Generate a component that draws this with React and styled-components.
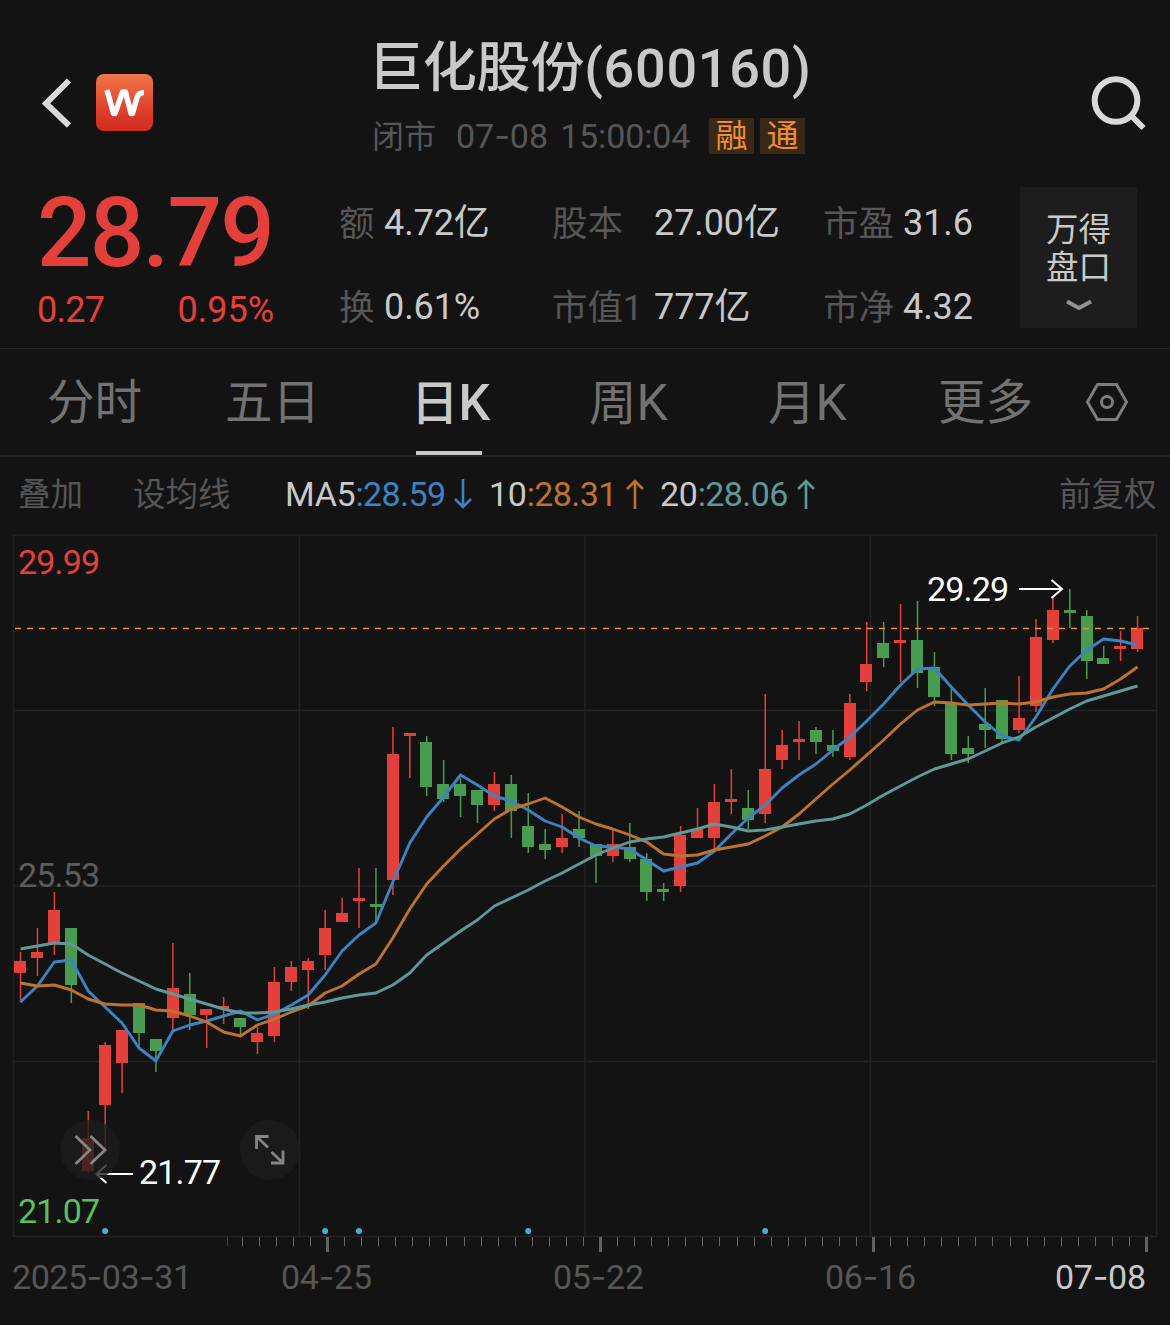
import React, { useState } from "react";
import styled, { createGlobalStyle } from "styled-components";

const GlobalStyle = createGlobalStyle`
  * {
    box-sizing: border-box;
  }
  body {
    margin: 0;
    background: #131313;
    font-family: Roboto, "Noto Sans CJK SC", sans-serif;
  }
`;

const colors = {
  up: "#e4403b",
  down: "#479c4f",
  ma5: "#3b83c2",
  ma10: "#bd732b",
  ma20: "#5f9997",
  grid: "#232323",
  bright: "#c9c9c9",
  muted: "#565656",
  tab: "#727272",
};

const Page = styled.main`
  width: 1170px;
  height: 1325px;
  overflow: hidden;
  background: #131313;
  color: ${colors.bright};
  white-space: nowrap;
`;

const Header = styled.header`
  display: flex;
  height: 170px;
  padding: 37px 24px 0 41px;
`;

const HeaderLeft = styled.div`
  display: flex;
  align-items: center;
  gap: 24px;
  width: 331px;
  height: 57px;
  margin-top: 37px;
`;

const HeaderCenter = styled.div`
  flex: 1;
`;

const Title = styled.h1`
  margin: 0 0 17px -3px;
  font-size: 54px;
  line-height: 64px;
  font-weight: 500;
  letter-spacing: -0.2px;
  span {
    letter-spacing: 0.7px;
  }
`;

const SubTitle = styled.div`
  display: flex;
  align-items: center;
  height: 36px;
  font-size: 34px;
  line-height: 36px;
  color: ${colors.muted};
`;

const Status = styled.span`
  width: 84px;
  padding-top: 1px;
  font-size: 32px;
`;

const TradeDate = styled.span`
  width: 104px;
`;

const TradeTime = styled.span`
  width: 149px;
  letter-spacing: -0.1px;
`;

const Hyphen = styled.span`
  font-family: Inter, sans-serif;
`;

const Badge = styled.span`
  width: 45px;
  height: 36px;
  margin-right: 6px;
  text-align: center;
  font-size: 32px;
  line-height: 36px;
  color: #ef8e34;
  background: #3b2917;
`;

const SearchIcon = styled.svg`
  margin-top: 37px;
`;

const Quote = styled.section`
  display: flex;
  height: 179px;
  padding: 15px 33px 0 37px;
  border-bottom: 1px solid #262424;
`;

const PriceBlock = styled.div`
  width: 303px;
  color: ${colors.up};
`;

const Price = styled.div`
  font-size: 96px;
  line-height: 96px;
  font-weight: 500;
  letter-spacing: -1.8px;
`;

const Changes = styled.div`
  display: flex;
  justify-content: space-between;
  width: 237px;
  margin-top: 9px;
  font-size: 36px;
  line-height: 40px;
  span:first-child {
    letter-spacing: -0.7px;
  }
`;

const Stats = styled.div`
  display: grid;
  grid-template-columns: 213px 271px 196px;
  grid-auto-rows: 40px;
  row-gap: 44px;
  padding-top: 18px;
`;

const Stat = styled.div`
  display: flex;
  font-size: 36px;
  line-height: 40px;
  letter-spacing: -0.1px;
`;

const StatLabel = styled.span`
  width: ${({ $width }) => $width}px;
  margin-left: -1px;
  margin-right: 1px;
  padding-top: 1px;
  font-size: 35.5px;
  color: ${colors.muted};
`;

const DepthButton = styled.button`
  display: flex;
  flex-direction: column;
  align-items: center;
  width: 117px;
  height: 141px;
  margin-top: 2px;
  padding: 24px 0 0;
  border: none;
  background: #1d1d1d;
  color: ${colors.bright};
  font-family: inherit;
  font-size: 32.5px;
  line-height: 38px;
  svg {
    margin-top: 12px;
  }
`;

const Tabs = styled.nav`
  display: flex;
  height: 108px;
  padding-left: 47px;
  border-bottom: 2px solid #242424;
`;

const Tab = styled.button`
  display: flex;
  flex-direction: column;
  justify-content: space-between;
  align-items: flex-start;
  width: ${({ $width }) => $width}px;
  padding: 24px 0 0;
  border: none;
  background: none;
  color: ${({ $active }) => ($active ? colors.bright : colors.tab)};
  font-family: inherit;
  font-size: 47.5px;
  line-height: 60px;
  font-weight: ${({ $active }) => ($active ? 500 : 400)};
  cursor: pointer;
  &::after {
    content: "";
    width: 66px;
    height: 4px;
    margin-left: 5px;
    background: ${({ $active }) => ($active ? colors.bright : "transparent")};
  }
`;

const TabLatin = styled.span`
  font-size: 50px;
`;

const SettingsIcon = styled.svg`
  margin-top: 33px;
`;

const Indicators = styled.div`
  display: flex;
  align-items: center;
  height: 77px;
  padding: 0 12px 3px 18px;
  font-size: 34px;
  line-height: 40px;
`;

const Option = styled.span`
  width: ${({ $width }) => $width}px;
  padding-top: 1px;
  font-size: 32.5px;
  color: ${colors.muted};
`;

const Average = styled.span`
  display: flex;
  align-items: center;
  width: ${({ $width }) => $width}px;
  letter-spacing: -0.6px;
  color: ${({ $color }) => $color};
  b {
    font-weight: 400;
    letter-spacing: -0.3px;
    color: ${colors.bright};
  }
  svg {
    margin-left: 8px;
  }
`;

const Chart = styled.svg`
  display: block;
`;

// [bullish, open/close top, open/close bottom, high, low]
const candles = [
  [1, 961, 973, 952, 1002], [1, 952, 958, 928, 976], [1, 910, 943, 892, 955],
  [0, 928, 985, 928, 1003], [1, 1138, 1171, 1111, 1173], [1, 1045, 1105, 1042, 1148],
  [1, 1030, 1063, 1030, 1093], [0, 1003, 1033, 1003, 1047], [0, 1039, 1051, 1039, 1072],
  [1, 988, 1018, 943, 1031], [0, 994, 1015, 973, 1030], [1, 1009, 1015, 1009, 1048],
  [1, 1006, 1009, 997, 1024], [0, 1018, 1027, 1018, 1035], [1, 1033, 1042, 1027, 1054],
  [1, 982, 1036, 967, 1042], [1, 967, 982, 961, 991], [1, 961, 970, 958, 1009],
  [1, 928, 955, 910, 970], [1, 913, 922, 898, 922], [1, 898, 901, 868, 928],
  [0, 904, 907, 868, 922], [1, 754, 880, 727, 895], [1, 733, 736, 733, 778],
  [0, 742, 787, 736, 796], [0, 784, 799, 760, 802], [0, 784, 796, 778, 817],
  [0, 790, 805, 790, 823], [1, 784, 805, 772, 811], [0, 784, 811, 775, 838],
  [0, 826, 847, 793, 853], [0, 844, 850, 829, 859], [1, 838, 847, 814, 853],
  [0, 829, 838, 811, 847], [0, 844, 856, 844, 883], [1, 844, 856, 829, 862],
  [0, 847, 859, 823, 862], [0, 859, 892, 853, 901], [0, 889, 892, 883, 901],
  [1, 835, 886, 826, 892], [1, 829, 838, 808, 838], [1, 802, 838, 784, 850],
  [1, 799, 802, 769, 814], [0, 808, 820, 790, 829], [1, 769, 814, 694, 823],
  [1, 745, 760, 730, 769], [1, 739, 742, 721, 760], [0, 730, 742, 727, 754],
  [0, 745, 751, 730, 757], [1, 703, 757, 694, 760], [1, 664, 682, 622, 691],
  [0, 643, 658, 622, 667], [1, 640, 643, 604, 682], [0, 640, 673, 601, 688],
  [0, 667, 697, 652, 706], [0, 703, 754, 688, 760], [0, 748, 754, 736, 763],
  [0, 724, 730, 688, 748], [0, 700, 739, 700, 742], [1, 718, 730, 676, 733],
  [1, 637, 706, 619, 712], [1, 610, 640, 598, 643], [0, 610, 613, 589, 628],
  [0, 616, 661, 610, 679], [0, 658, 664, 646, 664], [1, 646, 649, 631, 661],
  [1, 628, 649, 616, 652],
];

const ma5 = [
  1002, 986, 962, 960, 991, 1007, 1023, 1048, 1061, 1031, 1025, 1021, 1016, 1011,
  1020, 1014, 1005, 995, 975, 951, 935, 923, 882, 843, 817, 797, 775, 785, 796, 801,
  810, 821, 827, 838, 846, 847, 849, 860, 871, 867, 863, 851, 834, 818, 805, 788,
  775, 764, 750, 737, 721, 704, 685, 669, 668, 687, 705, 722, 736, 740, 717, 689,
  666, 650, 639, 641, 645,
];

const ma10 = [
  983, 986, 985, 990, 999, 1004, 1005, 1005, 1010, 1011, 1016, 1022, 1032, 1036,
  1025, 1019, 1012, 1006, 993, 986, 974, 964, 938, 909, 884, 866, 849, 834, 819, 809,
  804, 798, 807, 817, 824, 829, 835, 842, 854, 856, 855, 850, 847, 844, 836, 827,
  814, 799, 784, 770, 755, 740, 724, 710, 702, 703, 705, 704, 703, 704, 702, 697,
  694, 693, 689, 679, 667,
];

const ma20 = [
  949, 946, 943, 944, 955, 964, 973, 981, 989, 994, 999, 1004, 1009, 1013, 1013,
  1012, 1009, 1005, 1002, 998, 995, 993, 985, 973, 955, 943, 931, 920, 906, 898, 890,
  881, 873, 864, 855, 848, 842, 839, 837, 833, 829, 824, 827, 831, 830, 827, 824,
  821, 819, 814, 805, 795, 786, 777, 769, 764, 759, 751, 743, 737, 727, 718, 709,
  701, 696, 691, 686,
];

const eventDays = [5, 18, 20, 30, 44];

const candleX = (index) => 20.5 + index * 16.924;
const linePoints = (values) =>
  values.map((y, index) => `${candleX(index).toFixed(1)},${y}`).join(" ");

const tabs = [
  { label: "分时", width: 178 },
  { label: "五日", width: 186 },
  { label: "日", latin: "K", width: 178 },
  { label: "周", latin: "K", width: 179 },
  { label: "月", latin: "K", width: 170 },
  { label: "更多", width: 147 },
];

const stats = [
  { label: "额", value: "4.72亿", width: 44 },
  { label: "股本", value: "27.00亿", width: 101 },
  { label: "市盈", value: "31.6", width: 79 },
  { label: "换", value: "0.61%", width: 44 },
  { label: "市值1", value: "777亿", width: 101 },
  { label: "市净", value: "4.32", width: 79 },
];

const Arrow = ({ down }) => (
  <svg width="20" height="30" viewBox="0 0 20 30" fill="none" stroke="currentColor" strokeWidth="2.6">
    <path d={down ? "M10 0v28M2 20l8 8 8-8" : "M10 30V2M2 10l8-8 8 8"} />
  </svg>
);

const Logo = () => (
  <svg width="57" height="57" viewBox="0 0 57 57">
    <defs>
      <linearGradient id="logoFill" x1="0" y1="0" x2="0" y2="1">
        <stop offset="0" stopColor="#f0764a" />
        <stop offset="0.75" stopColor="#d93726" />
        <stop offset="1" stopColor="#cf2f22" />
      </linearGradient>
    </defs>
    <rect width="57" height="57" rx="8" fill="url(#logoFill)" />
    <path
      d="M11 16l6.500 23.500h1.500l7.500-21.500h3l5.500 21.500h1.500l4.500-16q1.600-5 7-5"
      fill="none"
      stroke="#fff"
      strokeWidth="5.400"
      strokeLinejoin="round"
    />
  </svg>
);

const Label = ({ x, y, width, fill = colors.muted, children }) => (
  <text x={x} y={y} fill={fill} fontSize="34" textLength={width}>
    {children}
  </text>
);

const DateLabel = ({ x, width, fill, date }) => (
  <Label x={x} y="1289" width={width} fill={fill}>
    {date.split("-").map((part, index) => (
      <React.Fragment key={index}>
        {index > 0 && <tspan fontFamily="Inter, sans-serif">-</tspan>}
        {part}
      </React.Fragment>
    ))}
  </Label>
);

const AxisTicks = () => {
  const ticks = [];
  for (let k = -6; k <= 48; k++) {
    const x = k === -6 ? 227 : Math.round(327 + k * 17.0625);
    const major = k >= 0 && k % 16 === 0;
    ticks.push(
      <rect
        key={k}
        x={major ? x - 1 : x}
        y="1237"
        width={major ? 3 : 1}
        height={major ? 15 : 9}
        fill={major ? "#626262" : "#686868"}
        opacity={k === -6 ? 0.5 : 1}
      />
    );
  }
  return <g>{ticks}</g>;
};

const KLineChart = () => (
  <Chart width="1170" height="791" viewBox="0 534 1170 791">
    <g fill="none" stroke={colors.grid} strokeWidth="1.500">
      <rect x="13.500" y="535" width="1143" height="701.500" />
      <path d="M299.500 535v701M585 535v701M870.500 535v701" />
      <path d="M13 710.500h1143M13 886h1143M13 1061.500h1143" />
    </g>
    <Label x="18" y="574" width="82" fill={colors.up}>29.99</Label>
    <Label x="18" y="887" width="82" fill="#5c5c5c">25.53</Label>
    <Label x="18" y="1223" width="82" fill="#5abf60">21.07</Label>
    {candles.map(([bullish, top, bottom, high, low], index) => {
      const x = candleX(index);
      return (
        <g key={index} fill={bullish ? colors.up : colors.down}>
          <rect x={x - 0.7} y={high} width="1.500" height={low - high} />
          <rect x={Math.round(x - 6.2)} y={top} width="12" height={bottom - top} />
        </g>
      );
    })}
    <path d="M15 628.500h1134" stroke="#ef8d2d" strokeWidth="1.400" strokeDasharray="6 6" />
    <g fill="none" strokeWidth="2.900" strokeLinejoin="round">
      <polyline points={linePoints(ma5)} stroke={colors.ma5} />
      <polyline points={linePoints(ma10)} stroke={colors.ma10} />
      <polyline points={linePoints(ma20)} stroke={colors.ma20} />
    </g>
    <g fill="none" stroke="#fff" strokeWidth="2">
      <path d="M1019 589h43M1051.500 580l10.500 9-10.500 9" />
      <path d="M133 1174H97M106.500 1165l-10 9 10 9" />
    </g>
    <Label x="927" y="601" width="82" fill="#fff">29.29</Label>
    <Label x="139" y="1184" width="82" fill="#fff">21.77</Label>
    <g fill="#1c1c1c">
      <circle cx="90" cy="1150" r="30" opacity="0.780" />
      <circle cx="270" cy="1150" r="30" opacity="0.900" />
    </g>
    <g fill="none" stroke="#858585" strokeWidth="2.800">
      <path d="M75.500 1136l14.500 14-14.500 14M90.500 1136l14.500 14-14.500 14" />
      <path d="M256.500 1149v-12.500h12M257 1137l11 10.500M283 1150.500v12.500h-12M282.500 1162.500l-11-10.500" />
    </g>
    {eventDays.map((day) => (
      <circle key={day} cx={candleX(day)} cy="1231" r="3" fill="#4bafca" />
    ))}
    <AxisTicks />
    <DateLabel x="12" width="180" date="2025-03-31" />
    <DateLabel x="281" width="91" date="04-25" />
    <DateLabel x="553" width="91" date="05-22" />
    <DateLabel x="825" width="91" date="06-16" />
    <DateLabel x="1055" width="91" date="07-08" fill={colors.bright} />
  </Chart>
);

const App = () => {
  const [activeTab, setActiveTab] = useState(2);
  return (
    <Page>
      <GlobalStyle />
      <Header>
        <HeaderLeft>
          <svg width="31" height="50" viewBox="0 0 31 50" fill="none" stroke="#d9d9d9" strokeWidth="6">
            <path d="M28 2.500L5 25.500 28 47.500" />
          </svg>
          <Logo />
        </HeaderLeft>
        <HeaderCenter>
          <Title>
            巨化股份<span>(600160)</span>
          </Title>
          <SubTitle>
            <Status>闭市</Status>
            <TradeDate>
              07<Hyphen>-</Hyphen>08
            </TradeDate>
            <TradeTime>15:00:04</TradeTime>
            <Badge>融</Badge>
            <Badge>通</Badge>
          </SubTitle>
        </HeaderCenter>
        <SearchIcon width="56" height="58" viewBox="0 0 56 58" fill="none" stroke="#d9d9d9">
          <circle cx="26" cy="26.500" r="21.300" strokeWidth="6" />
          <path d="M41 41.500l12.500 12.500" strokeWidth="6" />
        </SearchIcon>
      </Header>

      <Quote>
        <PriceBlock>
          <Price>28.79</Price>
          <Changes>
            <span>0.27</span>
            <span>0.95%</span>
          </Changes>
        </PriceBlock>
        <Stats>
          {stats.map((stat) => (
            <Stat key={stat.label}>
              <StatLabel $width={stat.width}>{stat.label}</StatLabel>
              <span>{stat.value}</span>
            </Stat>
          ))}
        </Stats>
        <DepthButton>
          <span>万得</span>
          <span>盘口</span>
          <svg width="28" height="12" viewBox="0 0 28 12" fill="none" stroke="#929292" strokeWidth="4">
            <path d="M2 2.500l12 6.500 12-6.500" />
          </svg>
        </DepthButton>
      </Quote>

      <Tabs>
        {tabs.map((tab, index) => (
          <Tab
            key={tab.label}
            $width={tab.width}
            $active={activeTab === index}
            onClick={() => setActiveTab(index)}
          >
            <span>
              {tab.label}
              {tab.latin && <TabLatin>{tab.latin}</TabLatin>}
            </span>
          </Tab>
        ))}
        <SettingsIcon width="44" height="40" viewBox="0 0 44 40" fill="none" stroke="#7d7d7d" strokeWidth="3">
          <path d="M12.500 2.500h19L41.500 20l-10 17.500h-19L2.500 20z" />
          <circle cx="22" cy="20" r="5.500" />
        </SettingsIcon>
      </Tabs>

      <Indicators>
        <Option $width={115}>叠加</Option>
        <Option $width={152}>设均线</Option>
        <Average $width={204} $color={colors.ma5}>
          <b>MA5</b>:28.59
          <Arrow down />
        </Average>
        <Average $width={171} $color={colors.ma10}>
          <b>10</b>:28.31
          <Arrow />
        </Average>
        <Average $width={399} $color={colors.ma20}>
          <b>20</b>:28.06
          <Arrow />
        </Average>
        <Option $width={98}>前复权</Option>
      </Indicators>

      <KLineChart />
    </Page>
  );
};

export default App;
